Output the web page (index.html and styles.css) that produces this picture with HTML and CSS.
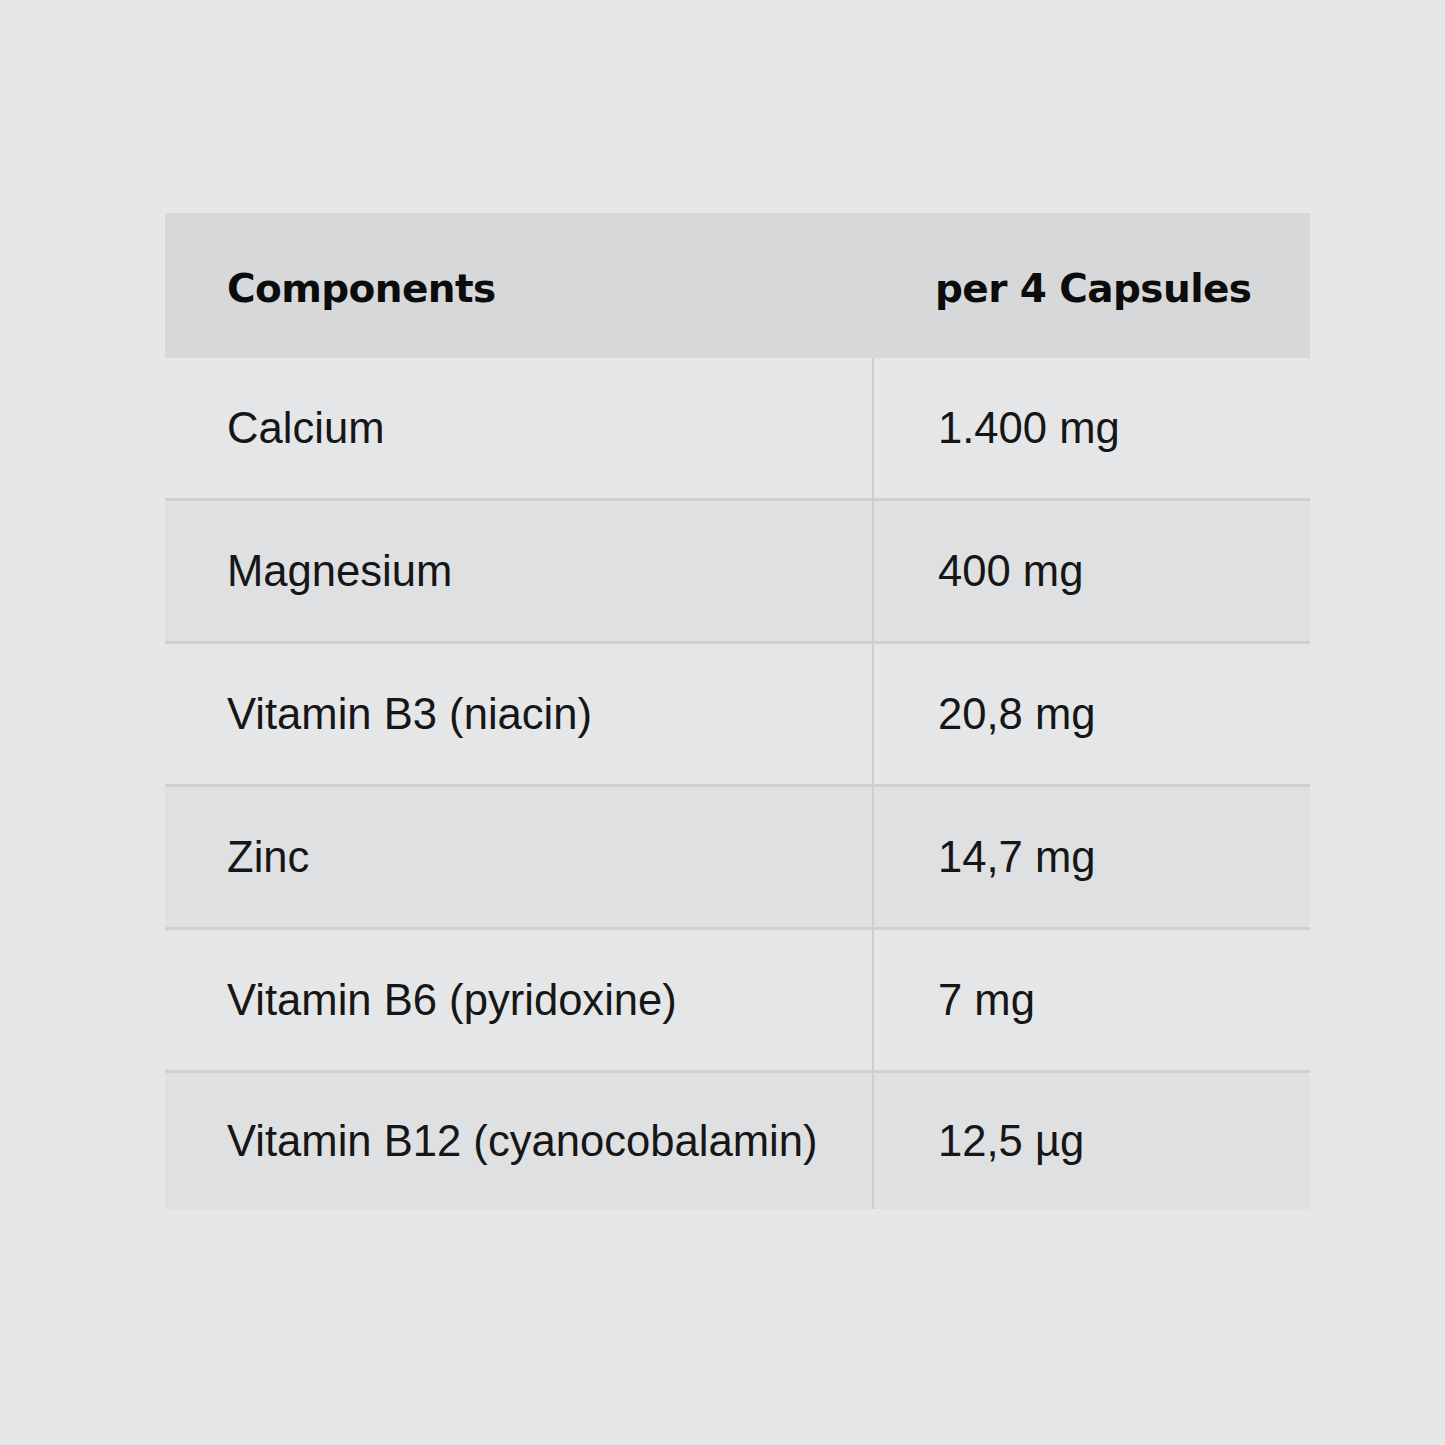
FILE: index.html
```html
<!DOCTYPE html>
<html lang="en">
<head>
<meta charset="utf-8">
<title>Components</title>
<link rel="stylesheet" href="styles.css">
</head>
<body>
<main class="page">
  <table class="nutri">
    <colgroup>
      <col class="col-name">
      <col class="col-value">
    </colgroup>
    <thead>
      <tr>
        <th class="name">Components</th>
        <th class="value">per 4 Capsules</th>
      </tr>
    </thead>
    <tbody>
      <tr><td class="name">Calcium</td><td class="value">1.400 mg</td></tr>
      <tr><td class="name">Magnesium</td><td class="value">400 mg</td></tr>
      <tr><td class="name">Vitamin B3 (niacin)</td><td class="value">20,8 mg</td></tr>
      <tr><td class="name">Zinc</td><td class="value">14,7 mg</td></tr>
      <tr><td class="name">Vitamin B6 (pyridoxine)</td><td class="value">7 mg</td></tr>
      <tr><td class="name">Vitamin B12 (cyanocobalamin)</td><td class="value">12,5 µg</td></tr>
    </tbody>
  </table>
</main>
</body>
</html>
```

FILE: styles.css
```css
html, body {
  margin: 0;
  padding: 0;
  background: #e6e7e9;
}
.page {
  width: 1445px;
  height: 1445px;
  box-sizing: border-box;
  padding: 213px 0 0 165px;
}
.nutri {
  width: 1145px;
  border-collapse: collapse;
  table-layout: fixed;
  color: #161616;
}
.col-name { width: 708px; }
.col-value { width: 437px; }
.nutri th {
  background: #d7d8da;
  height: 145px;
  box-sizing: border-box;
  padding: 6px 0 0 62px;
  text-align: left;
  font-family: "DejaVu Sans", Verdana, sans-serif;
  font-weight: bold;
  font-size: 39px;
  letter-spacing: -0.6px;
  color: #0c0c0c;
  vertical-align: middle;
}
.nutri td {
  height: 140px;
  padding: 0;
  font-family: "Liberation Sans", Arial, sans-serif;
  font-size: 43.6px;
  vertical-align: middle;
  border-bottom: 3px solid #cfd0d2;
}
.nutri tbody tr:last-child td {
  border-bottom: none;
  height: 136px;
}
.nutri td.name {
  padding-left: 62px;
  border-right: 2px solid #cdced0;
}
.nutri td.value { padding-left: 64px; }
.nutri tbody tr:nth-child(odd) td { background: #e5e6e8; }
.nutri tbody tr:nth-child(even) td { background: #dfe0e2; }
```
